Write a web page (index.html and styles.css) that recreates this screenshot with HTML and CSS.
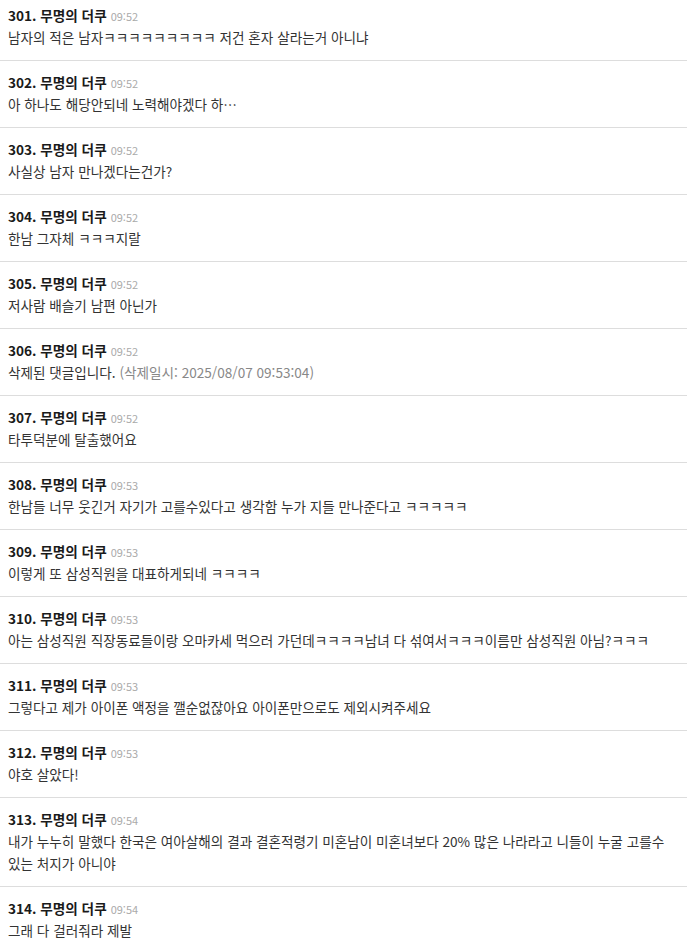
FILE: index.html
```html
<!DOCTYPE html>
<html lang="ko">
<head>
    <meta charset="UTF-8">
    <meta name="viewport" content="width=device-width, initial-scale=1.0">
    <title>댓글</title>
    <link rel="stylesheet" href="styles.css">
</head>
<body>
    <ul class="comment-list">
        <li class="comment">
            <div class="comment-head"><span class="num">301. 무명의 더쿠</span><span class="time">09:52</span></div>
            <div class="comment-body">남자의 적은 남자ㅋㅋㅋㅋㅋㅋㅋㅋㅋ 저건 혼자 살라는거 아니냐</div>
        </li>
        <li class="comment">
            <div class="comment-head"><span class="num">302. 무명의 더쿠</span><span class="time">09:52</span></div>
            <div class="comment-body">아 하나도 해당안되네 노력해야겠다 하…</div>
        </li>
        <li class="comment">
            <div class="comment-head"><span class="num">303. 무명의 더쿠</span><span class="time">09:52</span></div>
            <div class="comment-body">사실상 남자 만나겠다는건가?</div>
        </li>
        <li class="comment">
            <div class="comment-head"><span class="num">304. 무명의 더쿠</span><span class="time">09:52</span></div>
            <div class="comment-body">한남 그자체 ㅋㅋㅋ지랄</div>
        </li>
        <li class="comment">
            <div class="comment-head"><span class="num">305. 무명의 더쿠</span><span class="time">09:52</span></div>
            <div class="comment-body">저사람 배슬기 남편 아닌가</div>
        </li>
        <li class="comment">
            <div class="comment-head"><span class="num">306. 무명의 더쿠</span><span class="time">09:52</span></div>
            <div class="comment-body">삭제된 댓글입니다. <span class="deleted-at">(삭제일시: 2025/08/07 09:53:04)</span></div>
        </li>
        <li class="comment">
            <div class="comment-head"><span class="num">307. 무명의 더쿠</span><span class="time">09:52</span></div>
            <div class="comment-body">타투덕분에 탈출했어요</div>
        </li>
        <li class="comment">
            <div class="comment-head"><span class="num">308. 무명의 더쿠</span><span class="time">09:53</span></div>
            <div class="comment-body">한남들 너무 웃긴거 자기가 고를수있다고 생각함 누가 지들 만나준다고 ㅋㅋㅋㅋㅋ</div>
        </li>
        <li class="comment">
            <div class="comment-head"><span class="num">309. 무명의 더쿠</span><span class="time">09:53</span></div>
            <div class="comment-body">이렇게 또 삼성직원을 대표하게되네 ㅋㅋㅋㅋ</div>
        </li>
        <li class="comment">
            <div class="comment-head"><span class="num">310. 무명의 더쿠</span><span class="time">09:53</span></div>
            <div class="comment-body">아는 삼성직원 직장동료들이랑 오마카세 먹으러 가던데ㅋㅋㅋㅋ남녀 다 섞여서ㅋㅋㅋ이름만 삼성직원 아님?ㅋㅋㅋ</div>
        </li>
        <li class="comment">
            <div class="comment-head"><span class="num">311. 무명의 더쿠</span><span class="time">09:53</span></div>
            <div class="comment-body">그렇다고 제가 아이폰 액정을 깰순없잖아요 아이폰만으로도 제외시켜주세요</div>
        </li>
        <li class="comment">
            <div class="comment-head"><span class="num">312. 무명의 더쿠</span><span class="time">09:53</span></div>
            <div class="comment-body">야호 살았다!</div>
        </li>
        <li class="comment">
            <div class="comment-head"><span class="num">313. 무명의 더쿠</span><span class="time">09:54</span></div>
            <div class="comment-body">내가 누누히 말했다 한국은 여아살해의 결과 결혼적령기 미혼남이 미혼녀보다 20% 많은 나라라고 니들이 누굴 고를수 있는 처지가 아니야</div>
        </li>
        <li class="comment">
            <div class="comment-head"><span class="num">314. 무명의 더쿠</span><span class="time">09:54</span></div>
            <div class="comment-body">그래 다 걸러줘라 제발</div>
        </li>
    </ul>
</body>
</html>
```

FILE: styles.css
```css
body {
    margin: 0;
    background: #fff;
    font-family: "Noto Sans CJK KR", "Noto Sans", sans-serif;
    color: #333;
}
.comment-list {
    list-style: none;
    margin: -6px 0 0;
    padding: 0;
}
.comment {
    padding: 10px 8px 12px;
    border-bottom: 1px solid #ddd;
}
.comment-head {
    line-height: 20px;
    height: 20px;
    white-space: nowrap;
}
.num {
    font-size: 13.6px;
    font-weight: bold;
    color: #1a1a1a;
}
.time {
    margin-left: 4px;
    font-size: 11px;
    color: #aaa;
}
.comment-body {
    margin-top: 2px;
    font-size: 13.6px;
    line-height: 22px;
    color: #333;
    padding-right: 14px;
}
.deleted-at {
    color: #888;
}
```
